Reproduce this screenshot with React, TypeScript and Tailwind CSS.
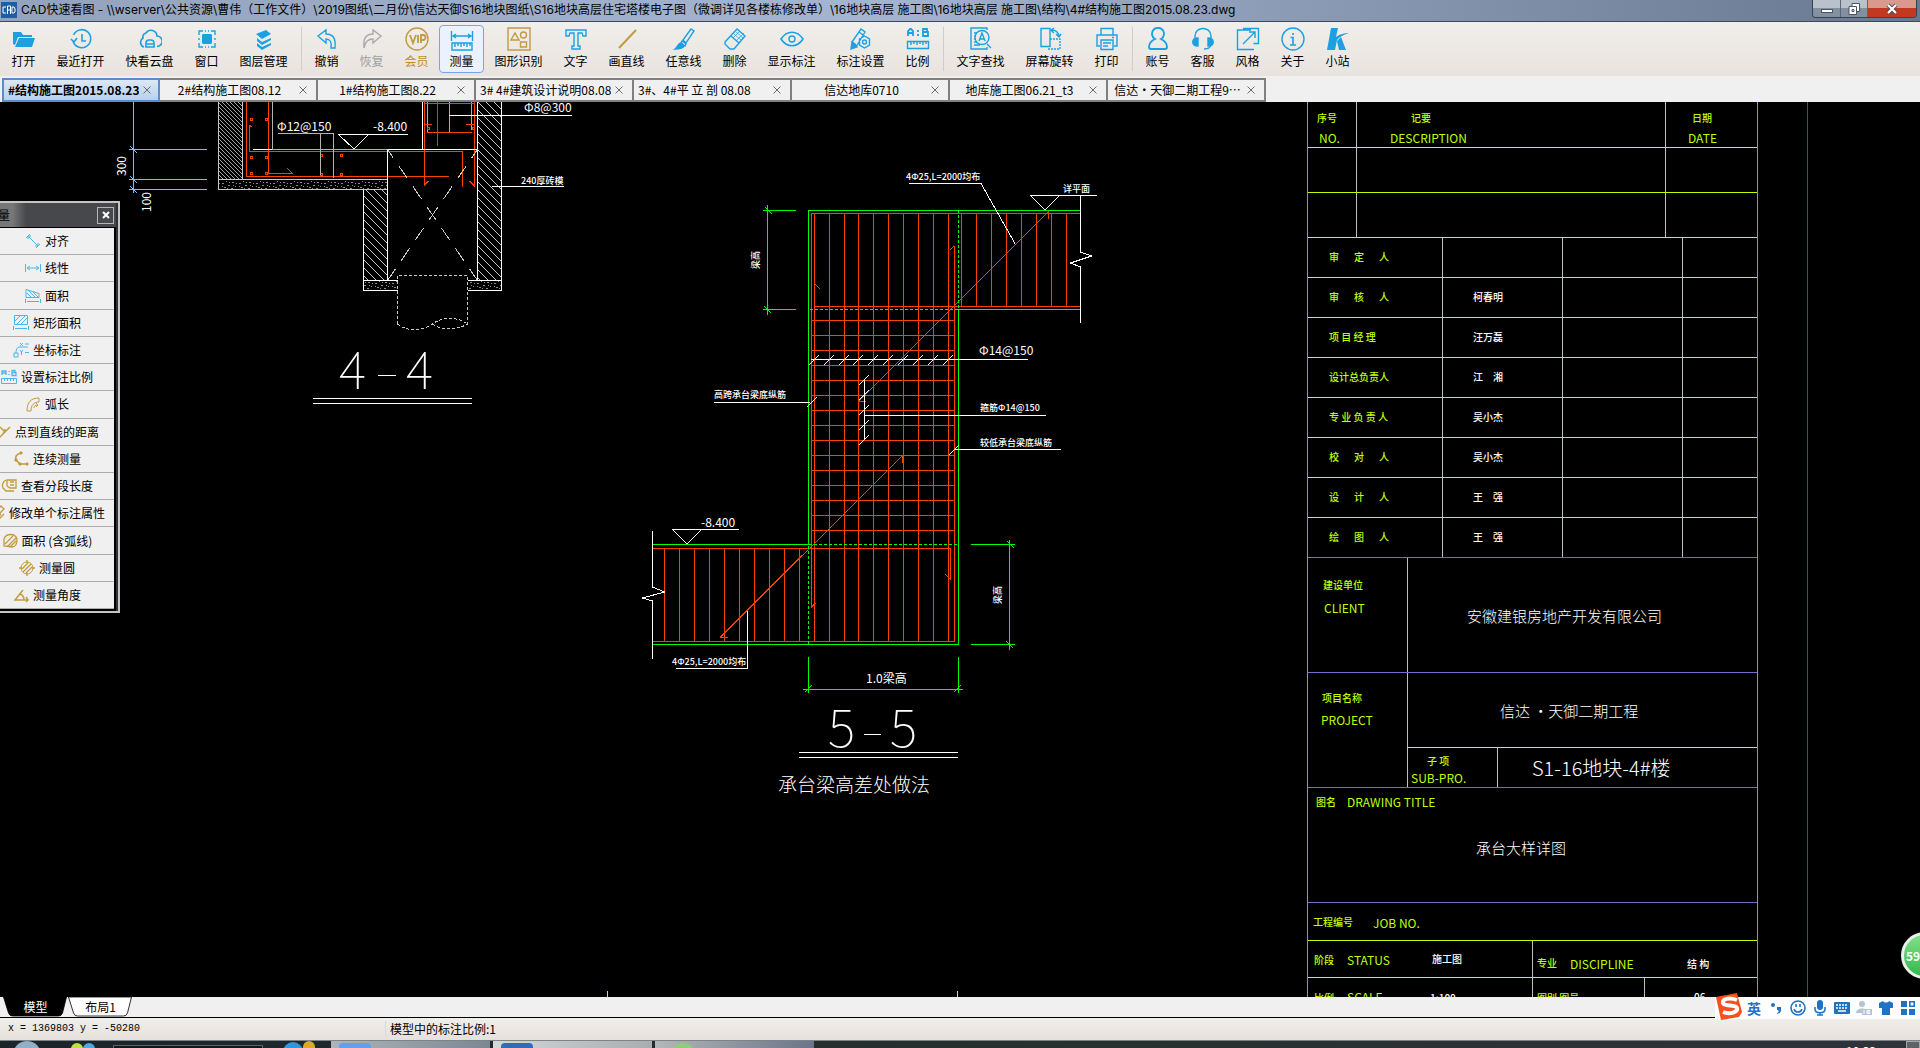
import React, { useState } from 'react';
import clsx from 'clsx';

const BLUE = '#1ba1e2';
const GOLD = '#c39a3f';
const GREY = '#a9a9a9';

interface Tool {
    id: string;
    label: string;
    icon: React.ReactNode;
}

const Icon: React.FC<{ color?: string; children: React.ReactNode }> = ({ color = BLUE, children }) => (
    <svg className="w-6 h-6 shrink-0" viewBox="0 0 24 24" fill="none" stroke={color} strokeWidth="1.4">{children}</svg>
);

const SmallIcon: React.FC<{ color?: string; children: React.ReactNode }> = ({ color = '#4db5ea', children }) => (
    <svg className="w-4 h-4 shrink-0" viewBox="0 0 16 16" fill="none" stroke={color} strokeWidth="1">{children}</svg>
);

const toolGroups: Tool[][] = [
    [
        { id: 'open', label: '打开', icon: <Icon><path fill={BLUE} stroke="none" d="M1 5h8l2 3h9v2H6l-3 8-2-1z M7 11h16l-3 9H3z" /></Icon> },
        { id: 'recent', label: '最近打开', icon: <Icon><path strokeWidth="1.6" d="M4.5 8A9 9 0 1 1 4 14 M2 12l3 3 3-4 M13 7v7h4" /></Icon> },
        { id: 'cloud', label: '快看云盘', icon: <Icon><path strokeWidth="1.7" d="M6 20a5 5 0 0 1-1-9 4 4 0 0 1 3-5 6 6 0 0 1 11 3 5 5 0 0 1 0 10.500M8 20v-4a3 3 0 0 1 3-3h2a3 3 0 0 1 3 3v4z M9 17h6" /></Icon> },
        { id: 'window', label: '窗口', icon: <Icon><path fill={BLUE} stroke="none" d="M8 7h8l1 1v8l-1 1H8l-1-1V8z" /><path d="M4 8V4h4 M16 4h4v4 M20 16v4h-4 M8 20H4v-4 M10 4h1 M13 4h1 M10 20h1 M13 20h1 M4 11v2 M20 11v2" /></Icon> },
        { id: 'layers', label: '图层管理', icon: <Icon><path fill={BLUE} stroke="none" d="M4 7l10-4 5 4-9 5z M5 11l5 4 9-4v2l-9 5-5-4z M5 16l5 4 9-4v2l-9 5-5-4z" /></Icon> },
    ],
    [
        { id: 'undo', label: '撤销', icon: <Icon><path d="M3 9l8-6v4c7 0 10 4 9 14h-4c1-6-1-9-5-9v4z" /></Icon> },
        { id: 'redo', label: '恢复', icon: <Icon color={GREY}><path d="M21 9l-8-6v4C6 7 3 11 4 21c1-6 4-9 9-9v4z" /></Icon> },
        { id: 'vip', label: '会员', icon: <Icon color={GOLD}><circle cx="12" cy="12" r="11" /><path strokeWidth="1.8" d="M5 8l3 8 3-8 M13 8v8 M16 16V8h2a2 2 0 0 1 0 5h-2" /></Icon> },
        { id: 'measure', label: '测量', icon: <Icon><path d="M1.500 4v10 M22.500 4v10 M3 9h18 M6 7L3 9l3 2 M18 7l3 2-3 2 M2 16h20v7H2z M5 16v4 M8 16v3 M11 16v4 M14 16v3 M17 16v4 M20 16v3" /></Icon> },
        { id: 'shapes', label: '图形识别', icon: <Icon color={GOLD}><path d="M1 1h22v22H1z M4 13l4-7 4 7z M13.500 15h6v5h-6z" /><circle cx="16.500" cy="8" r="3" /></Icon> },
        { id: 'text', label: '文字', icon: <Icon><path d="M2 3h20v6h-3l-1-3h-4v13h2v3H8v-3h2V6H6L5 9H2z" /></Icon> },
        { id: 'line', label: '画直线', icon: <Icon color={GOLD}><path strokeWidth="2" d="M4 21L21 3" /></Icon> },
        { id: 'free', label: '任意线', icon: <Icon><path d="M11 13L19 2l3 2-8 12z M10 14l4 3-1 2-4-3z" /><path fill={BLUE} d="M9 16l3 3c-1 3-6 3-9 3 3-2 3-6 6-6z" /></Icon> },
        { id: 'erase', label: '删除', icon: <Icon><path d="M2 15L14 2l8 7-11 13H7l-5-5z M8 9l8 7" /><path strokeWidth=".7" d="M11 7l7 6 M13 5l7 6 M10 11l7-7 M13 14l8-8" /></Icon> },
        { id: 'show', label: '显示标注', icon: <Icon><path strokeWidth="1.6" d="M1 12c6-9 16-9 22 0-6 9-16 9-22 0z" /><circle cx="12" cy="12" r="3" /></Icon> },
        { id: 'style', label: '标注设置', icon: <Icon><path fill={BLUE} d="M2 22l1-7 3 2 2 3z" /><path d="M3 15L12 2l4 3-9 15 M10 5l4 3 M15.500 9l5 3v6l-5 3-5-3v-6z" /><circle cx="15.500" cy="15" r="2" /></Icon> },
        { id: 'scale', label: '比例', icon: <Icon><path strokeWidth="1.8" d="M2 9V4l2-2h1l2 2v5 M2 6h5 M17 2h4v3h-4z M17 5h5v4h-5z M12 3v2 M12 7v2" /><path d="M1.500 14.500h21v7h-21z M5 15v3 M8 15v2 M11 15v3 M14 15v2 M17 15v3 M20 15v2" /></Icon> },
    ],
    [
        { id: 'find', label: '文字查找', icon: <Icon><path d="M18 3V1H2v21h16v-2 M5 6h3 M5 9h2 M5 12h2 M5 15h3 M5 18h6 M18 17l4 4 M10 14l3-8 3 8 M11 12h4" /><circle cx="13" cy="10.500" r="7" /></Icon> },
        { id: 'rotate', label: '屏幕旋转', icon: <Icon><path d="M3 1.500h9v18H3z M14 3c4 0 6 2 7 6 M16 1l-3 2 3 3 M18 7l3 3 2-3" /><path strokeDasharray="2 1" d="M12 12h10v10H10" /></Icon> },
        { id: 'print', label: '打印', icon: <Icon><path d="M6 8V1.500h12V8 M5 19H2V8h20v11h-3 M6 13h12v9.500H6z M8 16h8 M8 19h5 M17 10.500h2" /></Icon> },
    ],
    [
        { id: 'account', label: '账号', icon: <Icon><path strokeWidth="1.9" d="M9 12a6 6 0 1 1 6 0c4 2 6 4 6 8 0 2-1 2-2 2H5c-1 0-2 0-2-2 0-4 2-6 6-8z" /></Icon> },
        { id: 'service', label: '客服', icon: <Icon><path d="M4 12V9c0-10 16-10 16 0v3 M20 17c0 4-3 5-7 5" /><path fill={BLUE} d="M7 11v8c-7 0-7-8 0-8z M17 11v8c7 0 7-8 0-8z" /></Icon> },
        { id: 'skin', label: '风格', icon: <Icon><path d="M15 3H1.500v19.500H18 M7 1.500h15.500v15h-5 M7 17L19 5 M13 5h6v6" /></Icon> },
        { id: 'about', label: '关于', icon: <Icon><circle cx="12" cy="12" r="11" /><path strokeWidth="1.6" d="M12 6v2 M9.500 10.500H12V18 M9 18h6" /></Icon> },
        { id: 'site', label: '小站', icon: <Icon><path fill={BLUE} stroke="none" d="M5 1h7l-2 9c4-3 8-4 13-4-6 2-10 4-12 7L9 23H1z M11 14l4-4 5 13h-7z" /></Icon> },
    ],
];

const docs = [
    '#结构施工图2015.08.23.dwg',
    '2#结构施工图08.12',
    '1#结构施工图8.22',
    '3# 4#建筑设计说明08.08',
    '3#、4#平 立 剖 08.08',
    '信达地库0710',
    '地库施工图06.21_t3',
    '信达・天御二期工程9⋯',
];

const measureTools: Tool[] = [
    { id: 'aligned', label: '对齐', icon: <SmallIcon><path d="M1 5l4-4 M11 15l4-4 M3 3l10 10 M3 6V3h3 M10 13h3v-3" /></SmallIcon> },
    { id: 'linear', label: '线性', icon: <SmallIcon><path d="M.5 4v8 M15.500 4v8 M2 8h12 M5 6L2 8l3 2 M11 6l3 2-3 2" /></SmallIcon> },
    { id: 'area', label: '面积', icon: <SmallIcon><path d="M1 1.500l13 4v4H1z M2 5l4 4 M3 2l7 7 M7 3l6 6 M.5 11v4 M15.500 11v4 M2 13.500h12" /></SmallIcon> },
    { id: 'rect', label: '矩形面积', icon: <SmallIcon><path d="M1.500.5h13v9h-13z M2 6l5-5 M4 9l8-8 M8 9l6-6 M.5 11v4 M15.500 11v4 M2 13.500h12" /></SmallIcon> },
    { id: 'coord', label: '坐标标注', icon: <SmallIcon><path d="M1 11h4v4H1z M3 11c0-5 2-6 5-6h7 M7 1l3 3 M10 1L7 4 M12 2h4 M7 8l1.500 2v3 M10 8l-1.500 2 M12 10.500h4" /></SmallIcon> },
    { id: 'ratio', label: '设置标注比例', icon: <SmallIcon><path strokeWidth="1.3" d="M1 6V2h4v4 M1 4h4 M11 1.500h3v2h-3z M11 3.500h4v3h-4z M8 2v1 M8 5v1" /><path d="M.5 9.500h15v5H.5z M3.500 10v2 M6.500 10v2 M9.500 10v2 M12.500 10v2" /></SmallIcon> },
    { id: 'arc', label: '弧长', icon: <SmallIcon color={GOLD}><path d="M2 15C2 6 6 2 14 2v4C9 6 6 9 6 15z M9 12c0-2 1-3 4-3 M11 7l2 2-2 2" /></SmallIcon> },
    { id: 'point', label: '点到直线的距离', icon: <SmallIcon color={GOLD}><path strokeWidth="1.5" d="M3 15L15 3 M5 3l5 5 M8 9l2-1V5" /></SmallIcon> },
    { id: 'chain', label: '连续测量', icon: <SmallIcon color={GOLD}><path strokeWidth="1.5" d="M8 2C3 3 2 6 3 9l4 4h7" /><path fill={GOLD} d="M7 1h2v2H7z M2 8h2v2H2z M6 12h2v2H6z M13 12h2v2h-2z" /></SmallIcon> },
    { id: 'segments', label: '查看分段长度', icon: <SmallIcon color={GOLD}><path strokeWidth="1.3" d="M5 2C1 4 1 8 2 10l3 3h8 M6 2h9v8H9l-3-2z M9 4h4 M9 7h4" /></SmallIcon> },
    { id: 'edit', label: '修改单个标注属性', icon: <SmallIcon color={GOLD}><path strokeWidth="1.3" d="M3 10l9-9 3 3-9 9-4 1z M6 15l6-6 M10 14l5-5" /></SmallIcon> },
    { id: 'arcArea', label: '面积 (含弧线)', icon: <SmallIcon color={GOLD}><path strokeWidth="1.3" d="M2 13V6c2-6 11-6 13 0 0 5-2 8-5 8z M3 11l8-8 M5 14l9-9 M8 14l6-6" /></SmallIcon> },
    { id: 'circle', label: '测量圆', icon: <SmallIcon color={GOLD}><circle cx="8" cy="8" r="6" /><path strokeWidth="1.3" d="M3 9l6-6 M4 12l8-8 M7 13l6-6 M8 0v3 M8 13v3 M0 8h3 M13 8h3" /></SmallIcon> },
    { id: 'angle', label: '测量角度', icon: <SmallIcon color={GOLD}><path strokeWidth="1.5" d="M14 13H2L10 3 M7 7c3 1 4 3 4 6 M13 10l2 3-2 2" /></SmallIcon> },
];

// Label widths follow the character count
const toolWidths: Record<number, string> = { 2: 'w-[45px]', 3: 'w-[57px]', 4: 'w-[69px]' };

const TitleBar: React.FC = () => (
    <header className="flex items-start h-[22px] pl-px border-b border-[#3f4759] bg-linear-to-r from-[#93a3bd] via-[#a5b4d0] via-45% to-[#67788f]">
        <svg className="w-4 h-4 mt-0.5 shrink-0" viewBox="0 0 16 16">
            <rect width="16" height="16" fill="#1c5fa6" />
            <path d="M5 5H2v6h3 M6.500 12V4h3v8 M6.500 8h3 M11 5h2l1 2v3l-1 1h-2z" fill="none" stroke="#fff" />
        </svg>
        <h1 className="flex-1 min-w-0 truncate pl-1 text-xs leading-5 text-black font-['Inter','Noto_Sans_CJK_SC',sans-serif]">
            CAD快速看图 - \\wserver\公共资源\曹伟（工作文件）\2019图纸\二月份\信达天御S16地块图纸\S16地块高层住宅塔楼电子图（微调详见各楼栋修改单）\16地块高层 施工图\16地块高层 施工图\结构\4#结构施工图2015.08.23.dwg
        </h1>
        <div className="flex h-[18px] mr-[3px] overflow-hidden rounded-b border border-t-0 border-[#39404e]">
            <button aria-label="最小化" className="flex items-center justify-center w-7 border-r border-[#5b6677] bg-linear-to-b from-[#b9c1cb] from-45% to-[#8290a0] to-50%">
                <span className="w-3 h-1 mt-1 border border-[#4a5464] bg-white" />
            </button>
            <button aria-label="还原" className="flex items-center justify-center w-[27px] border-r border-[#5b6677] bg-linear-to-b from-[#b9c1cb] from-45% to-[#8290a0] to-50%">
                <svg className="w-3 h-3" viewBox="0 0 12 12" fill="#fff" stroke="#4a5464"><path d="M4 .5h7.500v8H4z" /><path d="M1 3.500h7.500v8H1z" /><path d="M4 6.500h2v2H4z" /></svg>
            </button>
            <button aria-label="关闭" className="flex items-center justify-center w-12 bg-linear-to-b from-[#d9998c] from-45% to-[#c2391f] to-50%">
                <svg className="w-3 h-3" viewBox="0 0 12 12"><path d="M2 2l8 8 M10 2l-8 8" stroke="#4d4d5a" strokeWidth="4" /><path d="M2 2l8 8 M10 2l-8 8" stroke="#fff" strokeWidth="2.200" /></svg>
            </button>
        </div>
    </header>
);

const Toolbar: React.FC<{ active: string; onSelect: (id: string) => void }> = ({ active, onSelect }) => (
    <nav className="flex items-center h-[54px] pl-px bg-linear-to-b from-[#f0efeb] to-[#e9e3df]">
        {toolGroups.map((group, i) => (
            <React.Fragment key={i}>
                {i > 0 && <span className="w-px h-11 ml-[3px] mr-0.5 bg-[#cfcdcc]" />}
                {group.map(tool => (
                    <button
                        key={tool.id}
                        onClick={() => onSelect(tool.id)}
                        className={clsx(
                            'flex flex-col items-center gap-0.5 h-12 pt-px rounded border text-xs leading-4 whitespace-nowrap',
                            toolWidths[tool.label.length],
                            active === tool.id ? 'border-[#7aa3ee] bg-[#ebf2fd]' : 'border-transparent',
                            tool.id === 'vip' && 'text-[#c08d2c]',
                            tool.id === 'redo' && 'text-[#a0a0a0]',
                        )}
                    >
                        {tool.icon}
                        {tool.label}
                    </button>
                ))}
            </React.Fragment>
        ))}
    </nav>
);

const DocumentTabs: React.FC = () => {
    const [current, setCurrent] = useState(0);
    return (
        <div className="flex h-[26px] pt-0.5 pl-0.5 bg-[#f0f0f0]">
            {docs.map((name, i) => (
                <div
                    key={name}
                    className={clsx(
                        'flex items-center w-[158px] h-6 border-2',
                        i === current
                            ? 'border-[#5d8cc9] bg-linear-to-b from-[#dce8f6] to-[#b9d0ec] font-bold'
                            : 'border-[#808080] border-l-0 bg-[#f0f0f0]',
                    )}
                >
                    <button
                        onClick={() => setCurrent(i)}
                        className={clsx('w-[131px] ml-1 overflow-hidden text-xs leading-5 whitespace-nowrap', name.length > 15 && 'text-left')}
                    >
                        {name}
                    </button>
                    <button aria-label={`关闭 ${name}`} className="flex items-center justify-center w-4">
                        <svg className="w-2 h-2" viewBox="0 0 8 8" stroke="#6a6a6a"><path d="M.5.5l7 7 M7.500.5l-7 7" /></svg>
                    </button>
                </div>
            ))}
        </div>
    );
};

const MeasurePalette: React.FC = () => (
    <aside className="absolute top-[99px] -left-6 flex flex-col w-[144px] h-[412px] pr-0.5 border-2 border-[#c4c4c4] bg-[#2f3136]">
        <div className="flex items-center justify-between h-6 pl-2 pr-0.5 text-xs text-black bg-linear-to-r from-[#777] from-25% to-[#47484b] to-35%">
            <span>测量</span>
            <button aria-label="关闭面板" className="flex items-center justify-center w-[17px] h-[17px] border border-[#b5b5b5]">
                <svg className="w-2 h-2" viewBox="0 0 8 8" stroke="#fff" strokeWidth="2"><path d="M1 1l6 6 M7 1L1 7" /></svg>
            </button>
        </div>
        <ul className="flex flex-col flex-1 border-2 border-t border-black bg-[#f0f0f0]">
            {measureTools.map(tool => (
                <li key={tool.id} className="flex flex-1">
                    <button className="flex items-center justify-center gap-1 w-full border-b border-[#acacac] text-xs whitespace-nowrap">
                        {tool.icon}
                        {tool.label}
                    </button>
                </li>
            ))}
        </ul>
    </aside>
);

const steps = (from: number, count: number, step = 15) => Array.from({ length: count }, (_, i) => from + i * step);

// Detail 4-4, the sump pit
const SumpDetail: React.FC = () => (
    <g fill="none">
        <g stroke="#7ab8ff">
            <path d="M133.500 102V193 M129 149.500h78 M129 179.500h78 M129 189.500h78 M130 146l7 7 M130 176l7 7 M130 186l7 7" />
            <path d="M427.500 102v30 M449.500 102v30 M471.500 102v28" />
        </g>
        <path fill="url(#hatchFine)" stroke="#c8c8c8" d="M218.500 102V179.500H242.500V102" />
        <path fill="url(#speckle)" stroke="#c8c8c8" d="M218.500 179.500H387.500v10H218.500z" />
        <path fill="url(#hatch)" stroke="#fff" d="M363.500 189.500V280.500h24v-91 M477.500 102V280.500h24V102" />
        <path fill="url(#speckle)" stroke="#fff" d="M397.500 280.500h-34v10h34 M467.500 280.500h34v10h-34" />
        <g stroke="#ff4000">
            <path d="M246.500 102v74.500h202 M249.500 125v26.500h213v35 M249.500 125l2 2 M268.500 102v71.500h24l-5-5" />
            <path d="M424.500 102v83l4-4 M474.500 102v84l-5-5 M424 103.500h50 M427 132.500h45 M424 124.500h8 M466 124.500h8" />
            {[[250, 119], [265, 119], [250, 157], [265, 157], [250, 173], [265, 173], [320, 155], [340, 155], [320, 174], [340, 174], [427, 128], [472, 128]].map(([x, y]) => (
                <rect key={`${x}-${y}`} x={x + .5} y={y - .5} width="2" height="2" />
            ))}
        </g>
        <path stroke="#b4b4b4" d="M272.500 102v47H387 M278 133.500h55.500v44 M320.500 133v42" />
        <path stroke="#666" d="M437.500 102v44" />
        <path stroke="#fff" d="M253 149.500h19 M387.500 280V149.500h90 M422.500 102v47 M449 115.500h123 M338 134.500h70 M339 135l15 14 14-14 M492 186.500h72" />
        <path stroke="#c8c8c8" strokeDasharray="15 10" strokeDashoffset="5" d="M387.500 149.500l90 131 M477.500 149.500l-90 131" />
        <path stroke="#c8c8c8" strokeDasharray="3 2" d="M397.500 324V275.500h70V324 M397.500 324c8 7 24 8 35 0 11-8 25-7 35 0 M432.500 324c10 7 25 6 35 0" />
        <path stroke="#fff" d="M313 398.500h159 M313 403.500h159" />
    </g>
);

// Detail 5-5, beam with a height step
const BeamDetail: React.FC = () => (
    <g fill="none">
        <g stroke="#ff4000">
            <path d="M1080 213.500H811.500V607l4-4 M814.500 213v428 M814.500 306.500h266 M954.500 245.500v396 M954 246l-4 4 M652 548.500h298.500v31l-5-5 M652 641.500h302 M815 284l5 5" />
            {[829, 844, 858, 873, 888, 903, 918, 933, 948].map(x => <path key={x} d={`M${x}.5 213V641`} />)}
            {steps(961, 8).map(x => <path key={x} d={`M${x}.5 213V306`} />)}
            {steps(664, 10).map(x => <path key={x} d={`M${x}.5 549V641`} />)}
            {steps(320, 15).map(y => <path key={y} d={`M811 ${y}.5H954`} />)}
            <path d="M720 637.500L902.500 455.500v7 M720 637.500h8 M859 401.500h7 M859 401L1048.500 211.500v7" />
        </g>
        <g stroke="#00ff00">
            <path d="M1080 210.500H808.500V544.500H652 M652 644.500h306.500V309.500h122" />
            <path strokeDasharray="3 2" d="M958.500 210v99H808 M808.500 644V544.500h150" />
            <path d="M767.500 205v110 M763 210.500h33 M763 309.500h33 M765 207l7 7 M764 306l7 7" />
            <path d="M1009.500 540v110 M971 544.500h44 M971 644.500h44 M1007 541l7 7 M1006 641l7 7" />
            <path d="M808.500 657v36 M958.500 657v36 M803 689.500h160 M805 692l7-7 M954 692l7-7" />
        </g>
        <g stroke="#fff">
            <path d="M909 183.500h72l34.500 61 M1030 195.500h67 M1031 196l14 14 14-14 M1080.500 196v56l11 4-21 7 10 4v56" />
            <path d="M652.500 531v56l12 5-22 6 10 3v58 M672 529.500h67 M673 530l14 14 14-14 M676 668.500h71.500V611" />
            <path d="M811 359.500h217 M864.500 380v60 M864 415.500h182 M955 449.500h106 M714 402.500h96 M807 407l10-10 M949 455l10-10" />
            {[814, 829, 844, 858, 873, 888, 903, 918, 933, 948].map(x => <path key={x} d={`M${x - 5} 365l10-10`} />)}
            {steps(380, 5).map(y => <path key={y} d={`M859 ${y + 5}l10-10`} />)}
            <path d="M799 752.500h159 M799 757.500h159" />
        </g>
    </g>
);

const signRows = [
    { role: '审\u3000\u2002定\u3000\u2002人', name: '' },
    { role: '审\u3000\u2002核\u3000\u2002人', name: '柯春明' },
    { role: '项 目 经 理', name: '汪万磊' },
    { role: '设计总负责人', name: '江\u3000湘' },
    { role: '专 业 负 责 人', name: '吴小杰' },
    { role: '校\u3000\u2002对\u3000\u2002人', name: '吴小杰' },
    { role: '设\u3000\u2002计\u3000\u2002人', name: '王\u3000强' },
    { role: '绘\u3000\u2002图\u3000\u2002人', name: '王\u3000强' },
];

const TitleBlock: React.FC = () => (
    <g>
        <g fill="none" shapeRendering="crispEdges">
            <path stroke="#007838" d="M1807.500 102V997" />
            <path stroke="#c0c0c0" d="M1356.500 102V237 M1665.500 102V237 M1442.500 237V557 M1562.500 237V557 M1682.500 237V557 M1407.500 557V787 M1497.500 747v40 M1532.500 940v57 M1644.500 977v20" />
            <path stroke="#bfff00" d="M1307 147.500h450 M1307 192.500h450 M1307 237.500h450 M1407 747.500h350 M1307 940.500h450 M1307 977.500h450 M607.500 991v6 M957.500 991v6" />
            {steps(277, 7, 40).map(y => <path key={y} stroke="#bfff00" d={`M1307 ${y}.5h450`} />)}
            <path stroke="#7b68c8" d="M1307 557.500h450 M1307 672.500h450 M1307 787.500h450 M1307 902.500h450" />
            <path stroke="#9f7fff" d="M1307.500 102V997 M1757.500 102V997" />
        </g>
        <g fill="#bfff00" className="text-[10px] font-medium">
            <text x="1317" y="122">序号</text>
            <text x="1411" y="122">记要</text>
            <text x="1692" y="122">日期</text>
            {signRows.map((row, i) => <text key={i} x="1329" y={261 + i * 40}>{row.role}</text>)}
            <text x="1323" y="589">建设单位</text>
            <text x="1322" y="702">项目名称</text>
            <text x="1427" y="765">子 项</text>
            <text x="1316" y="806">图名</text>
            <text x="1313" y="926">工程编号</text>
            <text x="1314" y="964">阶段</text>
            <text x="1537" y="967">专业</text>
            <text x="1314" y="1002">比例</text>
            <text x="1537" y="1002">图别 图号</text>
        </g>
        <g fill="#bfff00" className="text-[12px] font-normal">
            <text x="1319" y="143">NO.</text>
            <text x="1390" y="143">DESCRIPTION</text>
            <text x="1688" y="143">DATE</text>
            <text x="1324" y="613">CLIENT</text>
            <text x="1321" y="725">PROJECT</text>
            <text x="1411" y="783">SUB-PRO.</text>
            <text x="1347" y="807">DRAWING TITLE</text>
            <text x="1373" y="928">JOB NO.</text>
            <text x="1347" y="965">STATUS</text>
            <text x="1570" y="969">DISCIPLINE</text>
            <text x="1347" y="1002">SCALE</text>
        </g>
        <g fill="#fff" className="text-[10px] font-medium">
            {signRows.map((row, i) => <text key={i} x="1473" y={261 + i * 40}>{row.name}</text>)}
            <text x="1432" y="963">施工图</text>
            <text x="1687" y="968">结 构</text>
            <text x="1430" y="1002">1:100</text>
            <text x="1694" y="1001">06</text>
        </g>
        <g fill="#fff" className="text-[15px]">
            <text x="1467" y="622">安徽建银房地产开发有限公司</text>
            <text x="1500" y="717">信达 •天御二期工程</text>
            <text x="1476" y="854">承台大样详图</text>
        </g>
        <text x="1532" y="776" fill="#fff" className="text-[20px]">S1-16地块-4#楼</text>
    </g>
);

const DrawingText: React.FC = () => (
    <g fill="#fff">
        <g className="text-[12px] font-normal">
            <text x="277" y="131">Φ12@150</text>
            <text x="373" y="131">-8.400</text>
            <text x="524" y="112">Φ8@300</text>
            <text x="126" y="176" transform="rotate(-90 126 176)">300</text>
            <text x="151" y="212" transform="rotate(-90 151 212)">100</text>
            <text x="979" y="355">Φ14@150</text>
            <text x="701" y="527">-8.400</text>
            <text x="866" y="683">1.0梁高</text>
        </g>
        <g className="text-[9px] font-medium">
            <text x="521" y="184">240厚砖模</text>
            <text x="906" y="180">4Φ25,L=2000均布</text>
            <text x="672" y="665">4Φ25,L=2000均布</text>
            <text x="1063" y="192">详平面</text>
            <text x="980" y="411">箍筋Φ14@150</text>
            <text x="714" y="398">高跨承台梁底纵筋</text>
            <text x="980" y="446">较低承台梁底纵筋</text>
            <text x="759" y="269" transform="rotate(-90 759 269)">梁高</text>
            <text x="1001" y="604" transform="rotate(-90 1001 604)">梁高</text>
        </g>
        <g className="text-[52px] font-thin">
            <text x="339" y="389">4</text>
            <text x="406" y="389">4</text>
            <text x="828" y="747">5</text>
            <text x="890" y="747">5</text>
        </g>
        <path d="M378 375.500h18 M864 734.500h17" stroke="#fff" />
        <text x="778" y="792" className="text-[19px]">承台梁高差处做法</text>
    </g>
);

const DrawingCanvas: React.FC = () => (
    <svg className="block w-full h-full font-light font-['Noto_Sans_CJK_SC',sans-serif]" viewBox="0 102 1920 895" preserveAspectRatio="xMinYMin slice">
        <defs>
            <pattern id="hatch" width="8" height="8" patternUnits="userSpaceOnUse">
                <path d="M-1 -1L9 9 M-1 7l2 2 M7 -1l2 2" stroke="#c8c8c8" />
            </pattern>
            <pattern id="hatchFine" width="4" height="4" patternUnits="userSpaceOnUse">
                <path d="M-1 -1L5 5 M-1 3l2 2 M3 -1l2 2" stroke="#c8c8c8" strokeWidth=".8" />
            </pattern>
            <pattern id="speckle" width="17" height="10" patternUnits="userSpaceOnUse">
                <path d="M1 3.500h2 M5 1.500h1 M7 5.500h2 M3 7.500h2 M11 2.500h2 M14 6.500h1 M10 8.500h2 M15 3.500h1 M6 8.500h1 M1 6.500h1 M8 2.500h1 M12 5.500h1" stroke="#8a8a8a" />
            </pattern>
        </defs>
        <g shapeRendering="crispEdges">
            <SumpDetail />
            <BeamDetail />
        </g>
        <TitleBlock />
        <DrawingText />
    </svg>
);

const imeKeys: { id: string; label: string; icon: React.ReactNode }[] = [
    { id: 'lang', label: '中英文切换', icon: <span className="text-sm leading-5 font-bold">英</span> },
    { id: 'punct', label: '标点', icon: <svg className="w-3 h-4" viewBox="0 0 12 16" fill="#1f72c4"><circle cx="3" cy="5" r="2" /><path d="M7 7h4v3c0 2-1 3-4 4v-1c2-1 2-2 1-3H7z" /></svg> },
    { id: 'emoji', label: '表情', icon: <svg className="w-4 h-4" viewBox="0 0 16 16" fill="none" stroke="#1f72c4" strokeWidth="1.600"><circle cx="8" cy="8" r="7" /><path d="M4 9c1 4 7 4 8 0 M6 4v3 M10 4v3" /></svg> },
    { id: 'voice', label: '语音', icon: <svg className="w-3 h-4" viewBox="0 0 12 16" fill="#1f72c4"><rect x="3" width="6" height="10" rx="3" /><path d="M1 7v2c0 5 10 5 10 0V7 M6 12v3 M3 15h6" fill="none" stroke="#1f72c4" strokeWidth="1.500" /></svg> },
    { id: 'keyboard', label: '键盘', icon: <svg className="w-4 h-4" viewBox="0 0 16 16"><rect y="2" width="16" height="12" rx="1" fill="#1f72c4" /><path d="M2 5h12 M2 8h12" stroke="#fff" strokeWidth="1.500" strokeDasharray="2 1" /><path d="M4 11h8" stroke="#fff" strokeWidth="1.500" /></svg> },
    { id: 'user', label: '用户', icon: <svg className="w-4 h-4" viewBox="0 0 16 16" fill="#b5c3d8"><circle cx="6" cy="4" r="3" /><path d="M0 13c0-6 12-6 12 0z" /><path d="M6 9h10v6H6z" /><path d="M8 10v4 M14 10.500h-3v3h3v-1.500h-3" fill="none" stroke="#fff" /></svg> },
    { id: 'skin', label: '皮肤', icon: <svg className="w-3.5 h-4" viewBox="0 0 14 16" fill="#1f72c4"><path d="M0 3l4-2c1 2 5 2 6 0l4 2v5h-3v7H3V8H0z" /></svg> },
    { id: 'toolbox', label: '工具箱', icon: <svg className="w-3.5 h-4" viewBox="0 0 14 16" fill="#1f72c4"><path d="M0 1h6v6H0z M0 9h6v6H0z M8 9h6v6H8z" /><path d="M8.800 1.800h4.400v4.400H8.800z" fill="none" stroke="#1f72c4" strokeWidth="1.600" /></svg> },
];

const ImeBar: React.FC = () => (
    <div className="absolute right-0 top-0 flex items-center h-[22px] pr-px bg-white text-[#1f72c4]">
        <svg className="w-7 h-7 -mt-1" viewBox="0 0 28 28">
            <path fill="#f4511e" d="M1 5L22 1l5 19-3 5-18 3z" />
            <path d="M22 8C14 5 7 7 8 11s13 1 14 5-7 7-14 4" fill="none" stroke="#fff" strokeWidth="4" />
        </svg>
        {imeKeys.map(key => (
            <button key={key.id} aria-label={key.label} className="flex items-center justify-center w-[22px] h-5">{key.icon}</button>
        ))}
    </div>
);

const LayoutTabs: React.FC = () => {
    const [layout, setLayout] = useState('模型');
    return (
        <div className="relative flex h-[21px] pl-[3px] bg-[#f0f0f0] border-b border-black">
            {['模型', '布局1'].map(name => (
                <button key={name} onClick={() => setLayout(name)} className={clsx('relative w-[65px] h-5 pb-px text-xs leading-5', layout === name ? 'text-white' : 'text-black')}>
                    <svg className="absolute inset-0 w-full h-full" viewBox="0 0 64 20">
                        <path d="M0 0l5 16q1 3 4 3h46q3 0 4-3l4-16z" fill={layout === name ? '#000' : '#fff'} stroke="#000" strokeWidth=".8" />
                    </svg>
                    <span className="relative">{name}</span>
                </button>
            ))}
            <ImeBar />
        </div>
    );
};

const StatusBar: React.FC = () => (
    <footer className="flex items-center h-[22px] text-xs bg-linear-to-b from-[#f0efeb] to-[#e6e0dc]">
        <output className="w-[385px] pl-2 text-[10px] font-['Liberation_Mono',monospace]">x = 1369803 y = -50280</output>
        <span className="pl-1 border-l border-[#dad6d3]">模型中的标注比例:1</span>
    </footer>
);

const Taskbar: React.FC = () => (
    <div className="flex items-start h-2 overflow-hidden border-t border-[#7c8487] bg-linear-to-r from-[#1b242a] via-[#26302d] to-[#30333a]">
        <span className="w-7 h-7 ml-[13px] rounded-full bg-[#8fb0c8]" />
        <span className="w-3 h-3 ml-[30px] mt-0.5 rounded-full bg-[#c3e03c]" />
        <span className="w-3 h-3 mt-0.5 rounded-full bg-[#4ea9e0]" />
        <span className="w-[150px] h-2 ml-[18px] mt-1 border border-[#5f676b] bg-[#121719]" />
        <span className="w-5 h-5 ml-5 mt-px rounded-full bg-[#3196dd]" />
        <span className="w-3 h-5 rounded-full bg-[#dda928]" />
        <span className="flex w-[159px] h-4 ml-4 pl-2 pt-0.5 mr-[3px] bg-linear-to-r from-[#aeb4b9] to-[#7c8794]"><span className="w-8 h-4 rounded bg-[#5ea1ee]" /></span>
        <span className="flex w-[159px] h-4 pl-2 pt-0.5 mr-[3px] bg-linear-to-r from-[#d5d7d8] to-[#a9adb0]"><span className="w-8 h-4 rounded bg-[#2c6fb7]" /></span>
        <span className="flex w-[159px] h-4 pl-4 pt-0.5 bg-linear-to-r from-[#b3b8b7] to-[#6b7489]"><span className="w-6 h-4 rounded-t-full bg-[#8ccf74]" /></span>
        <time className="ml-auto mr-[30px] pt-1 text-xs leading-3 text-white">10:33</time>
        <span className="w-3.5 h-4 border border-[#a2a7aa] bg-[#5c6468]" />
    </div>
);

const App: React.FC = () => {
    const [tool, setTool] = useState('measure');

    return (
        <div className="flex flex-col h-screen overflow-hidden bg-black text-black font-['Noto_Sans_CJK_SC',sans-serif]">
            <TitleBar />
            <Toolbar active={tool} onSelect={setTool} />
            <DocumentTabs />
            <main className="relative flex-1 min-h-0 overflow-hidden bg-black">
                <DrawingCanvas />
                {tool === 'measure' && <MeasurePalette />}
                <div className="absolute -right-7 bottom-[18px] flex items-center w-[47px] h-[47px] pl-0.5 rounded-full border-3 border-[#e8f0ea] bg-linear-to-b from-[#7fe08a] to-[#2fb84a] text-xs font-bold text-white">
                    59
                </div>
            </main>
            <LayoutTabs />
            <StatusBar />
            <Taskbar />
        </div>
    );
};

export default App;
